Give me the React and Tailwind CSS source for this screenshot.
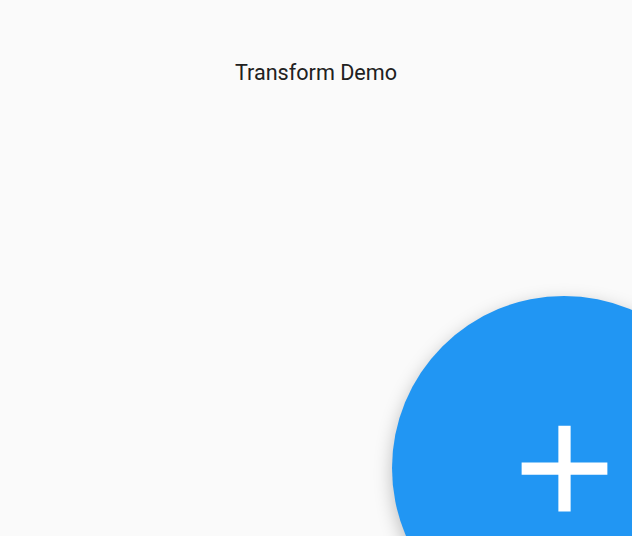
import React from "react";

const App = () => {
  return (
    <div className="relative w-[632px] h-[536px] overflow-hidden bg-[#fafafa]" style={{ fontFamily: "Roboto, 'Noto Sans', sans-serif" }}>
      {/* Title */}
      <div className="flex justify-center pt-[58px]">
        <span className="text-[21.6px] leading-[30px] text-[#212121]">Transform Demo</span>
      </div>

      {/* Scaled FAB */}
      <button className="absolute left-[392px] top-[296px] w-[344px] h-[344px] rounded-full bg-[#2196f3] flex items-center justify-center shadow-[0_6px_18px_rgba(0,0,0,0.25)]">
        <svg viewBox="0 0 24 24" className="w-[147px] h-[147px]" fill="white">
          <path d="M19 13h-6v6h-2v-6H5v-2h6V5h2v6h6v2z" />
        </svg>
      </button>
    </div>
  );
};

export default App;
